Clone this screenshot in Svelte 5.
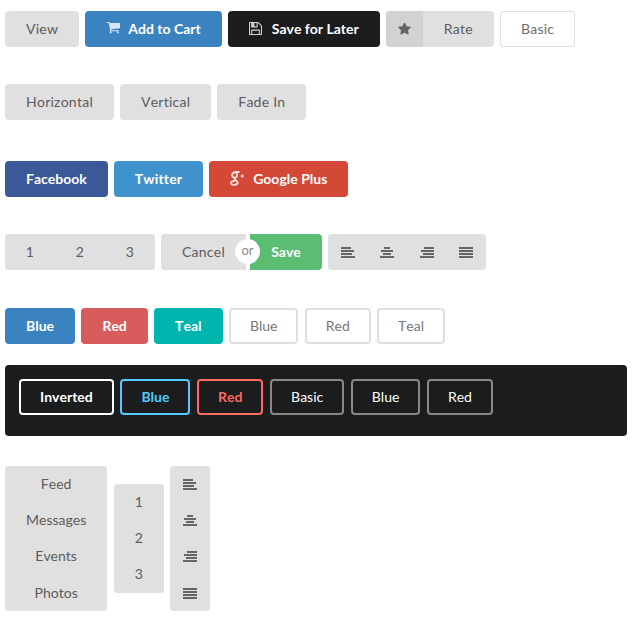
<script>
  const align = ['left', 'center', 'right', 'justify'];
  const bars = {
    left: [[0, 10], [0, 13], [0, 11], [0, 14]],
    center: [[4, 6], [1, 12], [3, 8], [0, 14]],
    right: [[4, 10], [1, 13], [3, 11], [0, 14]],
    justify: [[0, 14], [0, 14], [0, 14], [0, 14]]
  };
</script>

{#snippet alignIcon(kind)}
  <svg class="align" viewBox="0 0 14 11" aria-hidden="true">
    {#each bars[kind] as bar, i}
      <rect x={bar[0]} y={i * 3} width={bar[1]} height="2" />
    {/each}
  </svg>
{/snippet}

<main>
  <div class="row first">
    <button class="ui">View</button>
    <button class="ui blue strong">
      <svg class="icon cart" viewBox="0 256 1728 1408"><path d="M704 1536q0 52-38 90t-90 38-90-38-38-90 38-90 90-38 90 38 38 90zm896 0q0 52-38 90t-90 38-90-38-38-90 38-90 90-38 90 38 38 90zm128-1088v512q0 24-16.5 42.5t-40.5 21.5l-1044 122q13 60 13 70 0 16-24 64h920q26 0 45 19t19 45-19 45-45 19h-1024q-26 0-45-19t-19-45q0-11 8-31.5t16-36 21.5-40 15.5-29.5l-177-823h-204q-26 0-45-19t-19-45 19-45 45-19h256q16 0 28.5 6.5t19.5 15.5 13 24.5 8 26 5.5 29.5 4.5 26h1201q26 0 45 19t19 45z" /></svg>
      Add to Cart
    </button>
    <button class="ui black strong">
      <svg class="icon floppy" viewBox="128 128 1536 1536"><path d="M512 1536h768v-384h-768v384zm896 0h128v-896q0-14-10-38.5t-20-34.5l-281-281q-10-10-34-20t-39-10v416q0 40-28 68t-68 28h-576q-40 0-68-28t-28-68v-416h-128v1280h128v-416q0-40 28-68t68-28h832q40 0 68 28t28 68v416zm-384-928v-320q0-13-9.5-22.5t-22.5-9.5h-192q-13 0-22.5 9.5t-9.5 22.5v320q0 13 9.5 22.5t22.5 9.5h192q13 0 22.5-9.5t9.5-22.5zm640 32v928q0 40-28 68t-68 28h-1344q-40 0-68-28t-28-68v-1344q0-40 28-68t68-28h928q40 0 88 20t76 48l280 280q28 28 48 76t20 88z" /></svg>
      Save for Later
    </button>
    <button class="ui labeled">
      <span class="label">
        <svg class="star" viewBox="64 128 1664 1664"><path d="M1728 647q0 22-26 48l-363 354 86 500q1 7 1 20 0 21-10.5 35.5t-30.5 14.5q-19 0-40-12l-449-236-449 236q-22 12-40 12-21 0-31.5-14.5t-10.5-35.5q0-6 2-20l86-500-364-354q-25-27-25-48 0-37 56-46l502-73 225-455q19-41 49-41t49 41l225 455 502 73q56 9 56 46z" /></svg>
      </span>
      <span class="rest">Rate</span>
    </button>
    <button class="ui basic">Basic</button>
  </div>

  <div class="row gap-37">
    <button class="ui">Horizontal</button>
    <button class="ui">Vertical</button>
    <button class="ui">Fade In</button>
  </div>

  <div class="row gap-41">
    <button class="ui facebook strong">Facebook</button>
    <button class="ui twitter strong">Twitter</button>
    <button class="ui google strong">
      <svg class="gplus" viewBox="0 0 14 15" aria-hidden="true">
        <path d="M9.5 1 H5.5 C3 1 1.8 3 2.2 4.8 C2.6 6.6 5 7.2 6.4 6 C7.8 4.6 7 1.4 5.2 1.1" />
        <path d="M5 7 C4.2 7.8 4.6 8.3 5.4 8.9 C7.2 10 8 10.6 7.7 12 C7.2 14.2 2 14.4 1 12.6 C0.4 10.8 2.6 9.8 5.2 9.8" />
        <path class="thin" d="M10.5 5 H14 M12.2 3.2 V6.8" />
      </svg>
      Google Plus
    </button>
  </div>

  <div class="row gap-37">
    <div class="group">
      <button class="ui num">1</button>
      <button class="ui num">2</button>
      <button class="ui num">3</button>
    </div>
    <div class="pair">
      <button class="ui cancel">Cancel</button>
      <span class="or">or</span>
      <button class="ui save strong">Save</button>
    </div>
    <div class="group">
      {#each align as kind}
        <button class="ui tool">{@render alignIcon(kind)}</button>
      {/each}
    </div>
  </div>

  <div class="row colors gap-38">
    <button class="ui blue strong">Blue</button>
    <button class="ui red strong">Red</button>
    <button class="ui teal strong">Teal</button>
    <button class="ui outline">Blue</button>
    <button class="ui outline">Red</button>
    <button class="ui outline">Teal</button>
  </div>

  <section class="dark">
    <button class="ui inv white strong">Inverted</button>
    <button class="ui inv i-blue strong">Blue</button>
    <button class="ui inv i-red strong">Red</button>
    <button class="ui inv plain">Basic</button>
    <button class="ui inv plain">Blue</button>
    <button class="ui inv plain">Red</button>
  </section>

  <div class="verticals">
    <div class="stack">
      <button class="ui item">Feed</button>
      <button class="ui item">Messages</button>
      <button class="ui item">Events</button>
      <button class="ui item">Photos</button>
    </div>
    <div class="stack">
      <button class="ui item num">1</button>
      <button class="ui item num">2</button>
      <button class="ui item num">3</button>
    </div>
    <div class="stack">
      {#each align as kind}
        <button class="ui item tool">{@render alignIcon(kind)}</button>
      {/each}
    </div>
  </div>
</main>

<style>
  :global(body) {
    background: #fff;
  }

  main {
    padding: 0 8px 16px 5px;
    font-family: Lato, sans-serif;
  }

  .row {
    display: flex;
    gap: 6px;
  }

  .colors { gap: 6.3px; }

  .first { margin-top: 11px; }
  .gap-37 { margin-top: 37px; }
  .gap-38 { margin-top: 38px; }
  .gap-41 { margin-top: 41px; }

  .ui {
    display: inline-flex;
    align-items: center;
    justify-content: center;
    height: 36px;
    padding: 0 21px 2px;
    border: 0;
    border-radius: 4px;
    background: #e0e0e0;
    color: #5c5c5c;
    font: 400 14px Lato, sans-serif;
    font-kerning: none;
    letter-spacing: 0.25px;
    white-space: nowrap;
  }

  .strong { font-weight: 700; color: #fff; letter-spacing: 0; }

  .blue { background: #3b83c0; }
  .black { background: #1b1c1d; }
  .red { background: #d95c5c; }
  .teal { background: #00b5ad; }
  .facebook { background: #3b5998; }
  .twitter { background: #4092cc; letter-spacing: 0.15px; }
  .google { background: #d34836; }

  .icon {
    fill: currentColor;
    opacity: 0.8;
  }

  .cart {
    width: 14px;
    height: 11.4px;
    margin-right: 8px;
  }

  .floppy {
    width: 13px;
    height: 13px;
    margin-right: 10px;
  }

  .labeled {
    padding: 0;
    overflow: hidden;
    align-items: stretch;
  }

  .label {
    display: flex;
    align-items: center;
    justify-content: center;
    width: 37px;
    background: #d2d2d2;
  }

  .star {
    width: 13px;
    height: 13px;
    fill: #666;
  }

  .rest {
    display: flex;
    align-items: center;
    padding: 0 21px 2px;
  }

  .basic {
    background: #fff;
    box-shadow: inset 0 0 0 1px #dfdfdf;
    color: #6e6e6e;
  }

  .gplus {
    width: 14px;
    height: 15px;
    margin-right: 9px;
    fill: none;
    stroke: #fff;
    stroke-width: 1.8;
    opacity: 0.85;
  }

  .gplus .thin {
    stroke-width: 1;
  }

  .group {
    display: flex;
    border-radius: 4px;
    background: #e0e0e0;
  }

  .group .num {
    width: 50px;
    padding: 0 0 2px;
  }

  .tool {
    width: 39.5px;
    padding: 0;
  }

  .align {
    width: 14px;
    height: 11px;
    fill: #666;
  }

  .pair {
    position: relative;
    display: flex;
    gap: 4px;
  }

  .cancel { border-radius: 4px 0 0 4px; }

  .save {
    width: 72px;
    padding: 0 0 2px;
    background: #5bbd72;
    border-radius: 0 4px 4px 0;
  }

  .or {
    position: absolute;
    top: 5px;
    left: 74px;
    width: 25px;
    height: 25px;
    border-radius: 50%;
    background: #fff;
    color: #8a8a8a;
    font-size: 13px;
    line-height: 22px;
    text-align: center;
  }

  .outline {
    background: #fff;
    box-shadow: inset 0 0 0 2px #dfdfdf;
    color: #777;
    letter-spacing: 0;
  }

  .dark {
    display: flex;
    gap: 6.6px;
    margin-top: 21px;
    padding: 14px 14px 21px;
    border-radius: 4px;
    background: #1b1c1d;
  }

  .inv {
    background: transparent;
    color: #fff;
    letter-spacing: 0;
  }

  .white { box-shadow: inset 0 0 0 2px #fff; }
  .i-blue { box-shadow: inset 0 0 0 2px #54c8ff; color: #54c8ff; }
  .i-red { box-shadow: inset 0 0 0 2px #ff695e; color: #ff695e; }
  .plain { box-shadow: inset 0 0 0 2px #888; }

  .verticals {
    display: flex;
    align-items: center;
    gap: 6.5px;
    margin-top: 30px;
  }

  .stack {
    display: flex;
    flex-direction: column;
    border-radius: 4px;
    background: #e0e0e0;
  }

  .item {
    height: 36.33px;
    width: 100%;
    padding: 0 21px 2px;
    letter-spacing: 0;
  }

  .stack .tool {
    width: 40px;
    padding: 0;
  }

  .stack .num {
    width: 50px;
  }
</style>
